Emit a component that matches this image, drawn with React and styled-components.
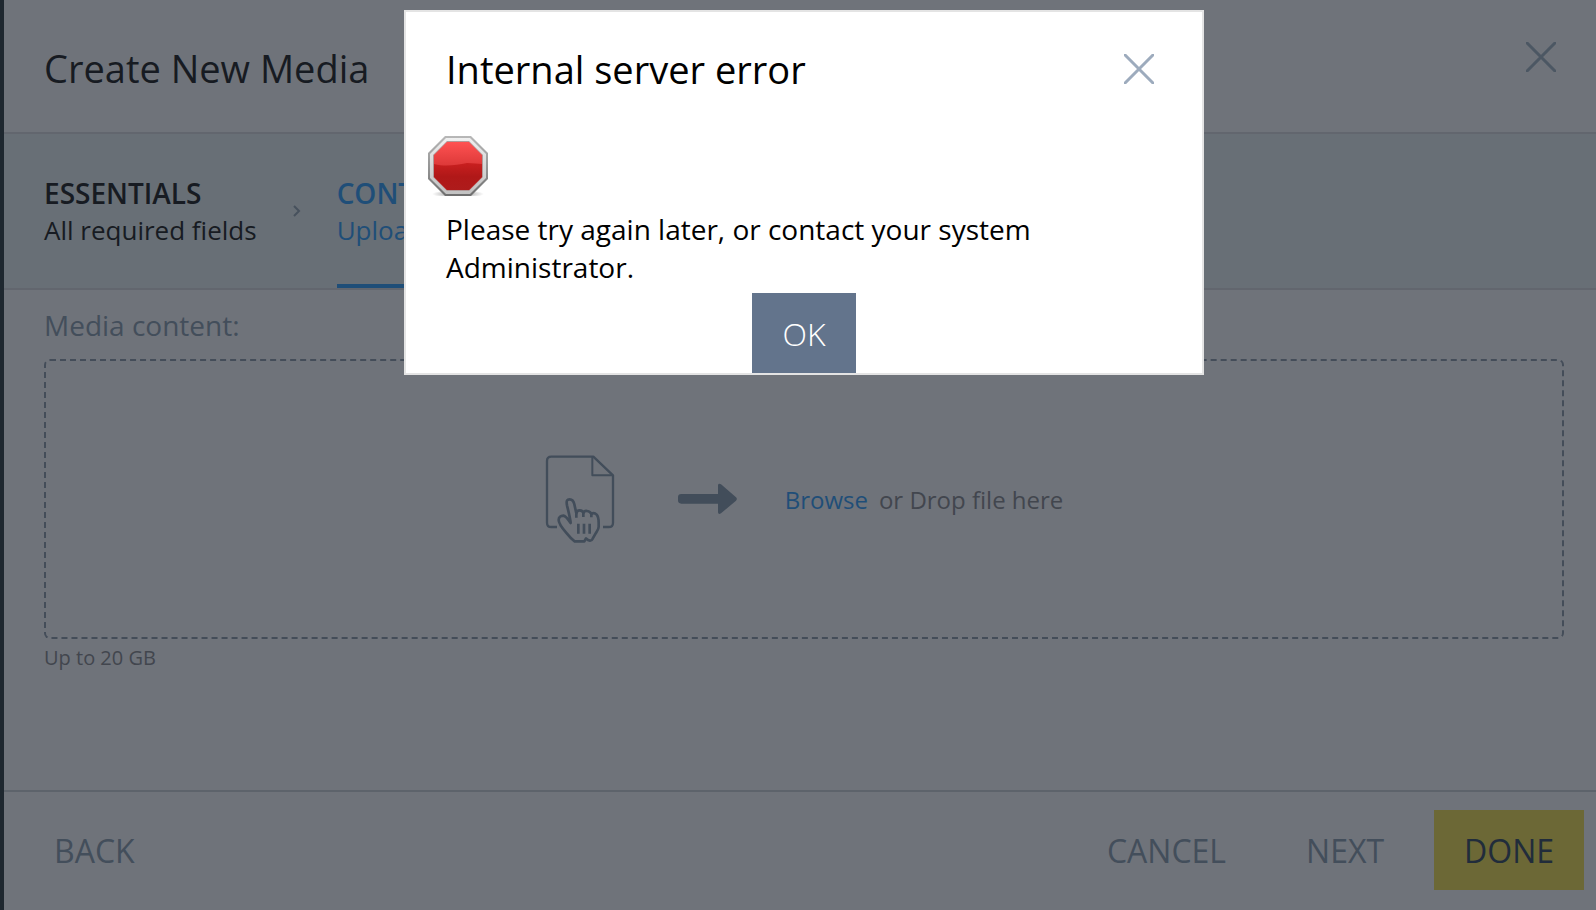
import React from 'react'
import { useState } from 'react'

import styled, { createGlobalStyle } from 'styled-components'

const GlobalStyle = createGlobalStyle`
    * {
        box-sizing: border-box;
    }

    body {
        margin: 0;
        background: #6f737a;
        font-family: 'Open Sans', 'Noto Sans', sans-serif;
    }

    button {
        font-family: inherit;
        border: none;
        background: none;
        padding: 0;
        cursor: pointer;
    }
`

const Page = styled.div`
    display: flex;
    flex-direction: column;
    min-height: 100vh;
    border-left: 4px solid #1e272f;
    background: #6f737a;
`

const Header = styled.header`
    display: flex;
    justify-content: space-between;
    align-items: flex-start;
    padding: 42px 40px 38px;
    border-bottom: 2px solid #62666e;
`

const Title = styled.h1`
    margin: 0;
    font-size: 38px;
    line-height: 52px;
    font-weight: 400;
    color: #171b22;
`

const CloseButton = styled.button`
    display: flex;
    color: ${props => props.$light ? '#9dabbd' : '#4c5763'};
`

const Steps = styled.nav`
    display: flex;
    padding: 0 40px;
    background: #686f76;
    border-bottom: 2px solid #62666e;
`

const Step = styled.a`
    padding: 40px 0 36px;
    border-bottom: 4px solid ${props => props.$active ? '#1f4e78' : 'transparent'};
    color: ${props => props.$active ? '#1f4e78' : '#171b22'};
    font-size: 26px;
    line-height: 36px;
    text-decoration: none;
`

const StepName = styled.strong`
    display: block;
    font-size: 28px;
    line-height: 38px;
    font-weight: 600;
`

const StepArrow = styled.svg`
    align-self: center;
    margin: 0 36px;
    stroke: #47515d;
`

const Content = styled.main`
    flex: 1;
    padding: 16px 32px 16px 40px;
`

const FieldLabel = styled.h2`
    margin: 0;
    font-size: 28px;
    line-height: 38px;
    font-weight: 400;
    color: #434e5b;
`

const DropZone = styled.div`
    display: flex;
    align-items: center;
    justify-content: center;
    min-height: 280px;
    margin-top: 15px;
    border: 2px dashed #444d59;
    border-radius: 6px;
`

const ArrowIcon = styled.svg`
    margin: 0 48px 0 63px;
`

const DropText = styled.p`
    margin: 2px 0 0;
    font-size: 24px;
    line-height: 32px;
    color: #42464e;
`

const BrowseButton = styled.button`
    margin-right: 11px;
    font-size: 24px;
    line-height: 32px;
    color: #1f4e78;
`

const Hint = styled.p`
    margin: 5px 0 0;
    font-size: 20px;
    line-height: 28px;
    color: #42464e;
`

const Footer = styled.footer`
    display: flex;
    gap: 20px;
    padding: 18px 12px 20px 20px;
    border-top: 2px solid #5d636b;
`

const Button = styled.button`
    height: 80px;
    padding: 0 30px;
    font-size: 32px;
    color: #434e5b;
`

const BackButton = styled(Button)`
    margin-right: auto;
`

const DoneButton = styled(Button)`
    background: #6c6836;
    color: #212c3b;
`

const Overlay = styled.div`
    position: absolute;
    inset: 0;
    display: flex;
    justify-content: center;
    align-items: flex-start;
    padding: 10px 0 0 12px;
`

const Dialog = styled.section`
    width: 100%;
    max-width: 800px;
    border: 2px solid #e4e4e4;
    background: #fff;
    color: #000;
`

const DialogHeader = styled.div`
    display: flex;
    justify-content: space-between;
    align-items: center;
    padding: 31px 48px 41px 40px;
`

const DialogTitle = styled.h2`
    margin: 0;
    font-size: 38px;
    line-height: 52px;
    font-weight: 400;
`

const StopIcon = styled.svg`
    display: block;
    margin-left: 22px;
`

const Message = styled.p`
    margin: 14px 40px 7px;
    font-size: 28px;
    line-height: 38px;
`

const OkButton = styled(Button)`
    display: block;
    margin: 0 auto;
    background: #63748c;
    color: #fff;
    font-weight: 300;
`

const CloseIcon = () => (
    <svg width="30" height="30" viewBox="0 0 30 30" stroke="currentColor" strokeWidth="3">
        <path d="M0 0 30 30M30 0 0 30" />
    </svg>
)

const FileIcon = () => (
    <svg width="70" height="89" viewBox="75 75 210 267" fill="none" stroke="#424d5a" strokeWidth="7" strokeLinejoin="round">
        <path d="M111 291H94Q81 291 81 278V93Q81 80 94 80H220L279 136V278Q279 291 266 291H249" />
        <path d="M217 80V136H279" strokeWidth="6" />
        <path
            strokeWidth="8"
            d="M152 279C151 266 146 247 141 226C138 211 142 208 149 208C157 208 161 213 163 223L169 250C170 243 173 241 179 241C186 241 189 244 190 249C192 243 196 242 202 243C209 244 212 247 214 252C219 248 225 249 230 254C235 260 236 267 236 278V290C236 298 231 303 227 310L218 326C214 335 206 333 198 325L193 334H164C155 328 148 320 141 311C130 298 116 283 116 270C116 262 122 257 130 257C138 258 143 266 152 279Z"
        />
        <path d="M169 248V263M190 248V261M214 251V262M175 281V311M192 281V311M209 281V311" strokeWidth="8" />
    </svg>
)

export default function App() {

    const [open, setOpen] = useState(true)

    return (
        <>
            <GlobalStyle />
            <Page>
                <Header>
                    <Title>Create New Media</Title>
                    <CloseButton aria-label="Close"><CloseIcon /></CloseButton>
                </Header>
                <Steps>
                    <Step href="#essentials">
                        <StepName>ESSENTIALS</StepName>
                        All required fields
                    </Step>
                    <StepArrow width="8" height="12" viewBox="0 0 8 12" fill="none" strokeWidth="2">
                        <path d="M1 1 6 6 1 11" />
                    </StepArrow>
                    <Step href="#content" $active>
                        <StepName>CONTENT</StepName>
                        Upload
                    </Step>
                </Steps>
                <Content>
                    <FieldLabel>Media content:</FieldLabel>
                    <DropZone>
                        <FileIcon />
                        <ArrowIcon width="59" height="32" viewBox="474 159 177 96" fill="#424d5a">
                            <path d="M484 192H594V166Q595 159 603 163L648 202Q653 207 648 212L603 250Q595 255 594 247V221H484Q474 221 474 211V202Q474 192 484 192Z" />
                        </ArrowIcon>
                        <DropText>
                            <BrowseButton>Browse</BrowseButton>
                            or Drop file here
                        </DropText>
                    </DropZone>
                    <Hint>Up to 20 GB</Hint>
                </Content>
                <Footer>
                    <BackButton>BACK</BackButton>
                    <Button>CANCEL</Button>
                    <Button>NEXT</Button>
                    <DoneButton>DONE</DoneButton>
                </Footer>
            </Page>
            {open && (
                <Overlay>
                    <Dialog role="alertdialog" aria-labelledby="error-title">
                        <DialogHeader>
                            <DialogTitle id="error-title">Internal server error</DialogTitle>
                            <CloseButton $light aria-label="Close" onClick={() => setOpen(false)}><CloseIcon /></CloseButton>
                        </DialogHeader>
                        <StopIcon width="60" height="60" viewBox="0 0 60 60">
                            <defs>
                                <linearGradient id="rim" x1="0" y1="0" x2="0" y2="1">
                                    <stop offset="0" stopColor="#b8b8b8" />
                                    <stop offset=".6" stopColor="#8f8f8f" />
                                    <stop offset="1" stopColor="#6e6e6e" />
                                </linearGradient>
                                <linearGradient id="metal" x1="0" y1="0" x2="0" y2="1">
                                    <stop offset="0" stopColor="#f0f0f0" />
                                    <stop offset=".5" stopColor="#d6d6d6" />
                                    <stop offset="1" stopColor="#c2c2c2" />
                                </linearGradient>
                                <linearGradient id="red" x1="0" y1="0" x2="0" y2="1">
                                    <stop offset="0" stopColor="#ff5252" />
                                    <stop offset=".5" stopColor="#dc3838" />
                                </linearGradient>
                                <linearGradient id="shade" x1="0" y1="0" x2="0" y2="1">
                                    <stop offset="0" stopColor="#c91f1f" />
                                    <stop offset=".5" stopColor="#b01818" />
                                    <stop offset="1" stopColor="#ae1b1b" />
                                </linearGradient>
                                <radialGradient id="shadow">
                                    <stop offset="0" stopColor="#000" stopOpacity=".5" />
                                    <stop offset="1" stopColor="#000" stopOpacity="0" />
                                </radialGradient>
                            </defs>
                            <ellipse cx="30" cy="58" rx="26" ry="4" fill="url(#shadow)" />
                            <path d="M17 0H43L60 17V43L43 60H17L0 43V17Z" fill="url(#rim)" />
                            <path d="M18 2H42L58 18V42L42 58H18L2 42V18Z" fill="url(#metal)" />
                            <path d="M19 5H41L55 19V41L41 55H19L5 41V19Z" fill="#b19a9a" />
                            <path d="M19 6H41L54 19V41L41 54H19L6 41V19Z" fill="url(#red)" />
                            <path d="M6 28C18 31 28 29 39 27C45 27 50 28 54 28V41L41 54H19L6 41Z" fill="url(#shade)" />
                        </StopIcon>
                        <Message>Please try again later, or contact your system Administrator.</Message>
                        <OkButton onClick={() => setOpen(false)}>OK</OkButton>
                    </Dialog>
                </Overlay>
            )}
        </>
    )
}
